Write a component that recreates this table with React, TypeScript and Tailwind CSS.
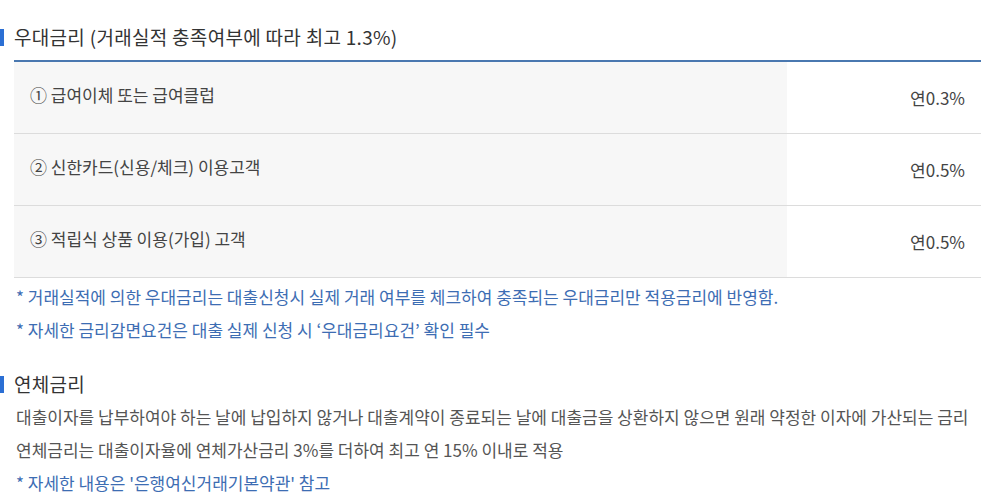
import React from "react";

const rows = [
  { label: "① 급여이체 또는 급여클럽", value: "연0.3%" },
  { label: "② 신한카드(신용/체크) 이용고객", value: "연0.5%" },
  { label: "③ 적립식 상품 이용(가입) 고객", value: "연0.5%" },
];

export default function App() {
  return (
    <div
      className="w-[981px] h-[500px] bg-white overflow-hidden text-[#444]"
      style={{ fontFamily: '"Noto Sans CJK KR", "Noto Sans", sans-serif' }}
    >
      <div className="pt-[26px]">
        <div className="flex items-center h-[22px]">
          <div className="w-[4px] h-[17px] bg-[#2b6fd4]" />
          <h3 className="ml-[10px] text-[19px] leading-[22px] text-[#333] tracking-[0.3px]">
            우대금리 (거래실적 충족여부에 따라 최고 1.3%)
          </h3>
        </div>
        <div className="ml-[14px] mt-[12px] border-t-2 border-[#4a78b0]">
          {rows.map((r) => (
            <div key={r.label} className="flex h-[72px] border-b border-[#dcdcdc]">
              <div className="w-[773px] bg-[#f7f7f7] flex items-center pl-[16px] pb-[6px] text-[17px] text-[#444]">
                {r.label}
              </div>
              <div className="flex-1 flex items-center justify-end pr-[16px] pt-[1px] text-[17px] text-[#444]">
                {r.value}
              </div>
            </div>
          ))}
        </div>
        <div className="ml-[16px] mt-[2px] text-[17px] leading-[33px] text-[#3d6db3]">
          <p>* 거래실적에 의한 우대금리는 대출신청시 실제 거래 여부를 체크하여 충족되는 우대금리만 적용금리에 반영함.</p>
          <p>* 자세한 금리감면요건은 대출 실제 신청 시 ‘우대금리요건’ 확인 필수</p>
        </div>
        <div className="flex items-center h-[22px] mt-[27px]">
          <div className="w-[4px] h-[17px] bg-[#2b6fd4]" />
          <h3 className="ml-[10px] text-[19px] leading-[22px] text-[#333] tracking-[0.3px]">연체금리</h3>
        </div>
        <div className="ml-[16px] mt-[5px] text-[17px] leading-[33px] text-[#555]">
          <p>대출이자를 납부하여야 하는 날에 납입하지 않거나 대출계약이 종료되는 날에 대출금을 상환하지 않으면 원래 약정한 이자에 가산되는 금리</p>
          <p>연체금리는 대출이자율에 연체가산금리 3%를 더하여 최고 연 15% 이내로 적용</p>
          <p className="text-[#3d6db3]">* 자세한 내용은 '은행여신거래기본약관' 참고</p>
        </div>
      </div>
    </div>
  );
}
